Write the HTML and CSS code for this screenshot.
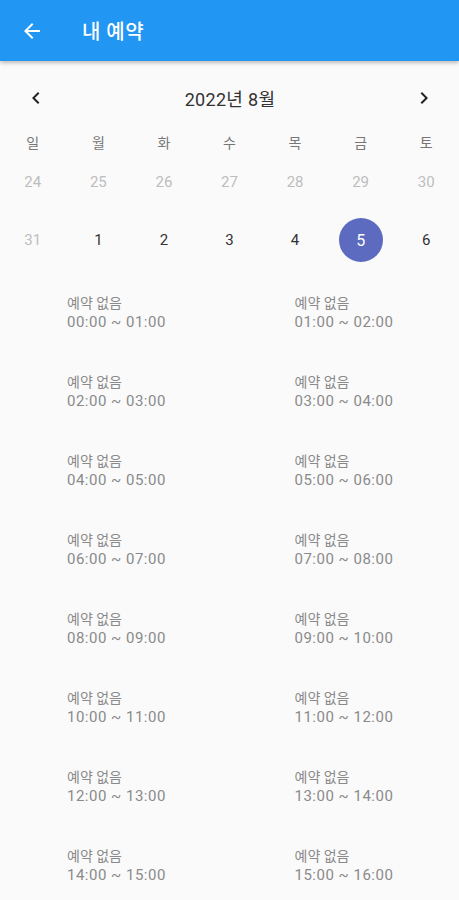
FILE: index.html
```html
<!DOCTYPE html>
<html lang="ko">
<head>
    <meta charset="UTF-8">
    <meta name="viewport" content="width=device-width, initial-scale=1.0">
    <title>내 예약</title>
    <link rel="stylesheet" href="styles.css">
</head>
<body>
    <header class="app-bar">
        <button class="icon-button back-button" aria-label="뒤로">
            <svg width="24" height="24" viewBox="0 0 24 24"><path d="M20 11H7.83l5.59-5.59L12 4l-8 8 8 8 1.41-1.41L7.83 13H20v-2z" fill="#fff"/></svg>
        </button>
        <h1>내 예약</h1>
    </header>

    <main>
        <section class="calendar">
            <div class="month-row">
                <button class="icon-button" aria-label="이전 달">
                    <svg width="24" height="24" viewBox="0 0 24 24"><path d="M15.41 7.41L14 6l-6 6 6 6 1.41-1.41L10.83 12z" fill="#222"/></svg>
                </button>
                <span class="month-title">2022년 8월</span>
                <button class="icon-button" aria-label="다음 달">
                    <svg width="24" height="24" viewBox="0 0 24 24"><path d="M10 6L8.59 7.41 13.17 12l-4.58 4.59L10 18l6-6z" fill="#222"/></svg>
                </button>
            </div>

            <div class="week-labels">
                <span>일</span><span>월</span><span>화</span><span>수</span><span>목</span><span>금</span><span>토</span>
            </div>

            <div class="days">
                <span class="day past">24</span>
                <span class="day past">25</span>
                <span class="day past">26</span>
                <span class="day past">27</span>
                <span class="day past">28</span>
                <span class="day past">29</span>
                <span class="day past">30</span>
                <span class="day past">31</span>
                <span class="day">1</span>
                <span class="day">2</span>
                <span class="day">3</span>
                <span class="day">4</span>
                <span class="day selected"><span>5</span></span>
                <span class="day">6</span>
            </div>
        </section>

        <section class="slots" id="slots">
            <!-- time slots are rendered here -->
        </section>
    </main>

    <script>
        var slots = document.getElementById("slots");

        function pad(n) {
            return (n < 10 ? "0" : "") + n;
        }

        for (var h = 0; h < 16; h++) {
            var item = document.createElement("div");
            item.className = "slot";
            item.innerHTML = "<span class=\"slot-state\">예약 없음</span>" +
                "<span class=\"slot-time\">" + pad(h) + ":00 ~ " + pad(h + 1) + ":00</span>";
            slots.appendChild(item);
        }
    </script>
</body>
</html>
```

FILE: styles.css
```css
body {
    margin: 0;
    padding: 0;
    background-color: #fafafa;
    font-family: Roboto, "Noto Sans CJK KR", sans-serif;
    color: #333;
}

.icon-button {
    display: flex;
    align-items: center;
    justify-content: center;
    width: 48px;
    height: 48px;
    padding: 0;
    border: none;
    background: none;
    cursor: pointer;
}

/* top bar */
.app-bar {
    display: flex;
    align-items: center;
    height: 61px;
    padding-left: 8px;
    background-color: #2196f3;
    box-shadow: 0 2px 4px rgba(0, 0, 0, 0.25);
    position: relative;
}

.app-bar h1 {
    margin: 0 0 0 26px;
    color: #fff;
    font-size: 20px;
    font-weight: 500;
    letter-spacing: 0.5px;
}

/* calendar */
.month-row {
    display: flex;
    align-items: center;
    justify-content: space-between;
    height: 48px;
    margin-top: 13px;
    padding: 0 11px 0 12px;
}

.month-title {
    font-size: 18px;
    letter-spacing: 0.3px;
    color: #333;
}

.week-labels,
.days {
    display: grid;
    grid-template-columns: repeat(7, 1fr);
    text-align: center;
}

.week-labels {
    margin-top: 6px;
    height: 30px;
    line-height: 30px;
    font-size: 14px;
    color: #777;
}

.days {
    grid-auto-rows: 48px;
    row-gap: 10px;
    font-size: 15px;
}

.day {
    display: flex;
    align-items: center;
    justify-content: center;
}

.day.past {
    color: #bdbdbd;
}

.day.selected span {
    display: flex;
    align-items: center;
    justify-content: center;
    width: 44px;
    height: 44px;
    border-radius: 50%;
    background-color: #5c6bc0;
    color: #fff;
    font-size: 16px;
}

/* time slots */
.slots {
    display: grid;
    grid-template-columns: 1fr 1fr;
    padding-top: 30px;
}

.slot {
    display: flex;
    flex-direction: column;
    height: 79px;
    padding-left: 67px;
    line-height: 19px;
    color: #8a8a8a;
}

.slot:nth-child(even) {
    padding-left: 65px;
}

.slot-state {
    font-size: 14px;
}

.slot-time {
    font-size: 15px;
    letter-spacing: 0.5px;
}
```
